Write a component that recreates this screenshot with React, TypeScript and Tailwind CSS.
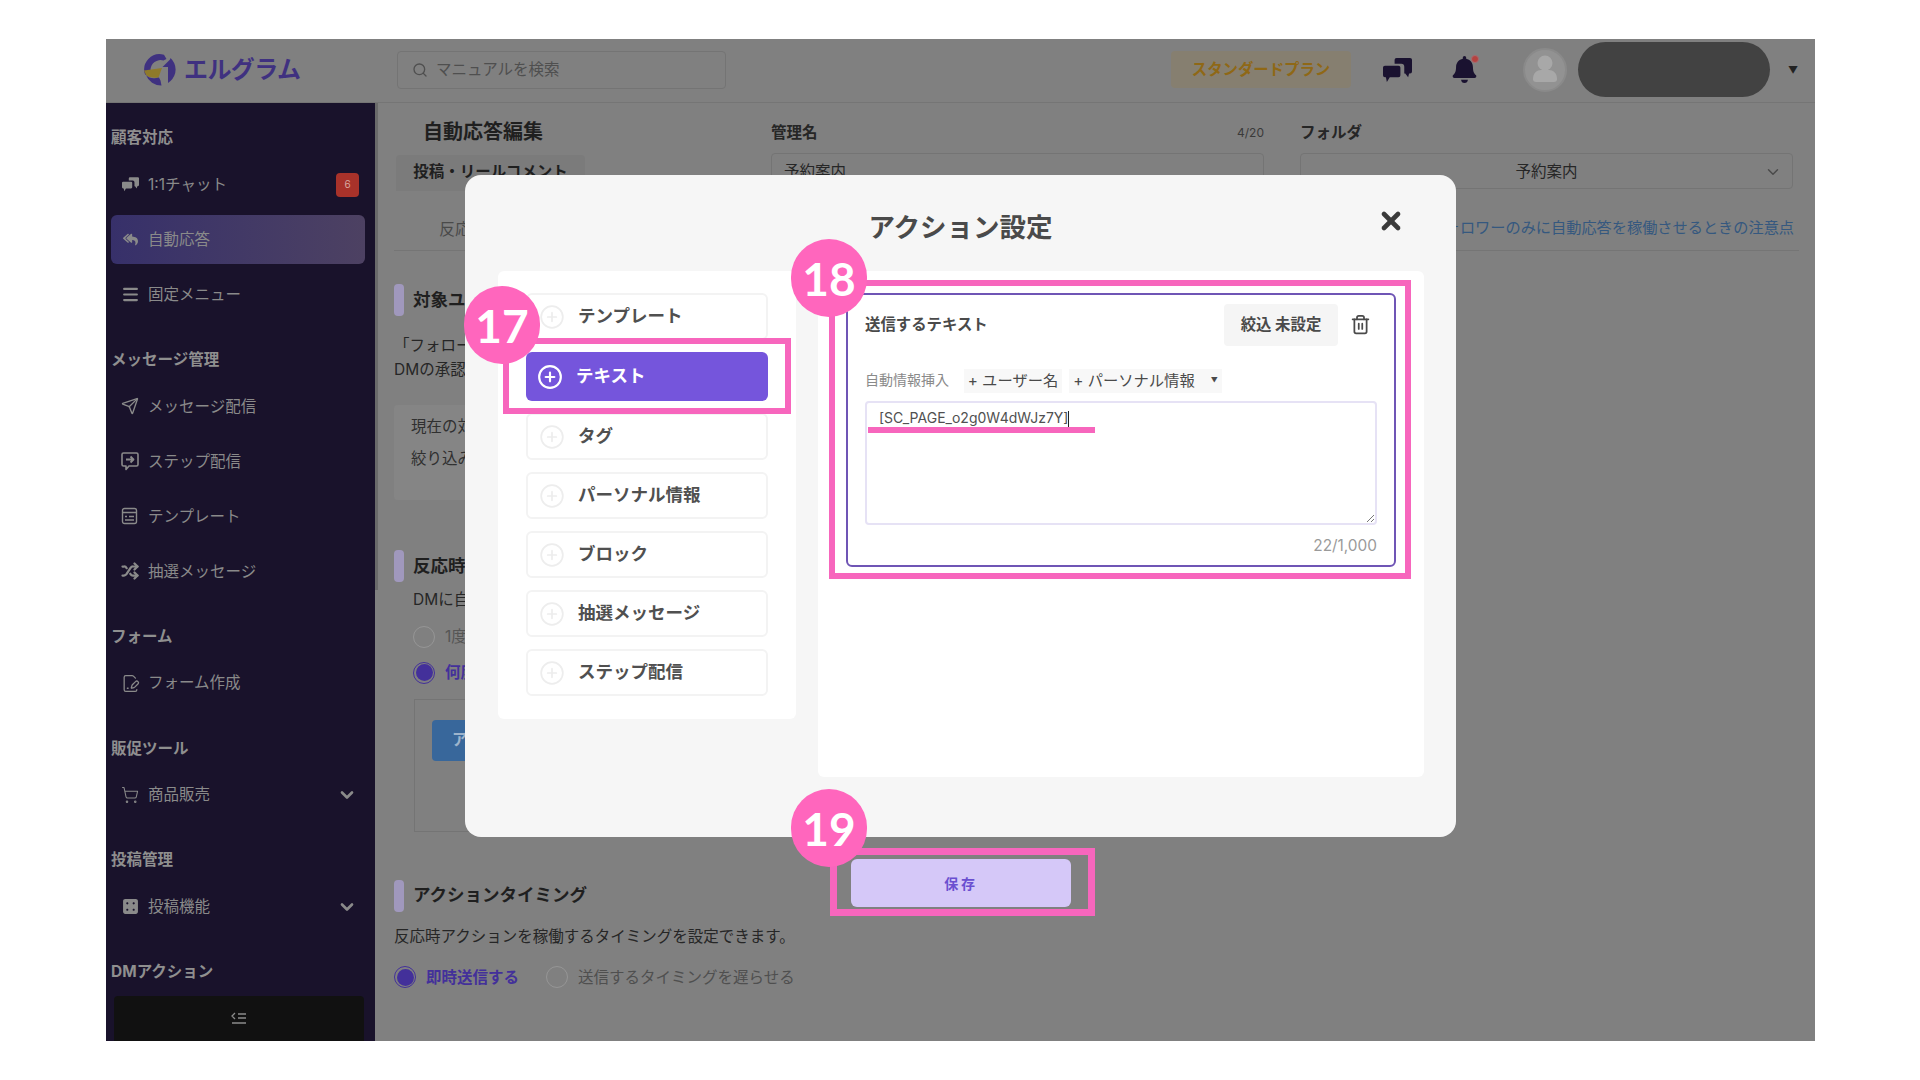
import { ChevronDown, CirclePlus, FilePenLine, Menu, Search, Send, Shuffle, ShoppingCart, Trash2, X } from "lucide-react";
import { FaBell, FaDiceFour, FaReplyAll } from "react-icons/fa";
import type { ReactNode } from "react";

const JP = "font-['Inter','Noto_Sans_CJK_JP',sans-serif]";

type NavItem = { label: string; icon: ReactNode; active?: boolean; badge?: string; chevron?: boolean };
type NavSection = { title: string; items: NavItem[] };

function Bubbles({ size, className }: { size: number; className?: string }) {
  return (
    <svg width={size} height={size} viewBox="0 0 30 26" fill="currentColor" className={className}>
      <path d="M12 2a2 2 0 0 1 2-2h14a2 2 0 0 1 2 2v12a2 2 0 0 1-2 2h-1l-1 4-3-4h-1V9a3 3 0 0 0-3-3h-7z" />
      <path d="M2 8h14a2 2 0 0 1 2 2v8a2 2 0 0 1-2 2H7l-3 5-1-5H2a2 2 0 0 1-2-2v-8a2 2 0 0 1 2-2z" />
    </svg>
  );
}

function StepIcon() {
  return (
    <svg width="20" height="20" viewBox="0 0 20 20" fill="none" stroke="currentColor" strokeWidth="1.6" strokeLinejoin="round">
      <path d="M3.5 2h13A1.5 1.5 0 0 1 18 3.5v10a1.5 1.5 0 0 1-1.5 1.500H9l-3 3.500V15H3.500A1.500 1.500 0 0 1 2 13.500v-10A1.500 1.500 0 0 1 3.500 2z" />
      <path d="M6 8.500h7.500M10.500 5.500l3 3-3 3" strokeWidth="1.800" />
    </svg>
  );
}

function TemplateIcon() {
  return (
    <svg width="18" height="18" viewBox="0 0 18 18" fill="none" stroke="currentColor" strokeWidth="1.400">
      <rect x="1.500" y="1.500" width="14" height="15" rx="2" />
      <path d="M1.500 5.500h14M4 9.500h2M8 9.500h5M4 13h9" />
    </svg>
  );
}

const sections: NavSection[] = [
  {
    title: "顧客対応",
    items: [
      { label: "1:1チャット", icon: <Bubbles size={17} />, badge: "6" },
      { label: "自動応答", icon: <FaReplyAll size={15} />, active: true },
      { label: "固定メニュー", icon: <Menu size={19} strokeWidth={2.800} /> },
    ],
  },
  {
    title: "メッセージ管理",
    items: [
      { label: "メッセージ配信", icon: <Send size={18} strokeWidth={1.800} /> },
      { label: "ステップ配信", icon: <StepIcon /> },
      { label: "テンプレート", icon: <TemplateIcon /> },
      { label: "抽選メッセージ", icon: <Shuffle size={18} strokeWidth={3} /> },
    ],
  },
  { title: "フォーム", items: [{ label: "フォーム作成", icon: <FilePenLine size={19} strokeWidth={1.600} /> }] },
  { title: "販促ツール", items: [{ label: "商品販売", icon: <ShoppingCart size={18} strokeWidth={1.400} />, chevron: true }] },
  { title: "投稿管理", items: [{ label: "投稿機能", icon: <FaDiceFour size={17} />, chevron: true }] },
];

const actions = ["テンプレート", "テキスト", "タグ", "パーソナル情報", "ブロック", "抽選メッセージ", "ステップ配信"];

function Logo() {
  return (
    <svg width="33" height="33" viewBox="0 0 33 33" className="shrink-0">
      <path d="M2.200 22A15.500 15.500 0 0 1 21 1.700L23.500 6l-3 1.500A10 10 0 0 0 7.500 17z" fill="#3f3180" />
      <path d="M1 17.500 19 15l-3.500 9.500Q7 25.500 3 22z" fill="#8f7a2a" />
      <path d="M3 22q5 5 13 2.500l1.500 3 1 5A16 16 0 0 1 3 22z" fill="#3f3180" />
      <path d="M19.500 14 27 6.500 27.500 5a15.500 15.500 0 0 1 0 23l-2.500 2V14z" fill="#3f3180" />
    </svg>
  );
}

function Sidebar() {
  return (
    <aside className="w-[269px] shrink-0 bg-[#19122b] flex flex-col overflow-hidden">
      <nav className="flex-1 overflow-hidden pt-[23px]">
        {sections.map((s) => (
          <div key={s.title} className="mb-[28.750px]">
            <div className="h-6 pl-[5px] mb-[10px] flex items-center text-[15.500px] font-bold text-[#8f8f8f]">{s.title}</div>
            <div className="flex flex-col gap-[6px]">
              {s.items.map((it) => (
                <div
                  key={it.label}
                  className={
                    it.active
                      ? "h-[49px] ml-[5px] mr-[10px] pl-[9px] pr-[6px] rounded-md flex items-center gap-[8px] text-[15.500px] text-[#8a8a8a] bg-gradient-to-r from-[#37306a] to-[#4d4162]"
                      : "h-[49px] ml-[5px] mr-[10px] pl-[9px] pr-[6px] flex items-center gap-[8px] text-[15.500px] text-[#8a8a8a]"
                  }
                >
                  <span className="w-[20px] flex justify-center shrink-0 text-[#8a8a8a]">{it.icon}</span>
                  <span className="flex-1">{it.label}</span>
                  {it.badge && (
                    <span className="w-[23px] h-[24px] rounded bg-[#a8322a] text-[#d8a8a0] text-[10px] flex items-center justify-center">
                      {it.badge}
                    </span>
                  )}
                  {it.chevron && <ChevronDown size={20} strokeWidth={3.200} className="mr-[2px] text-[#8a8a8a]" />}
                </div>
              ))}
            </div>
          </div>
        ))}
        <div className="h-6 pl-[5px] flex items-center text-[15.500px] font-bold text-[#8f8f8f]">DMアクション</div>
      </nav>
      <div className="h-[45px] shrink-0 ml-2 mr-[11px] rounded-t bg-[#111111] flex items-center justify-center">
        <svg width="16" height="16" viewBox="0 0 16 16" fill="none" stroke="#8a8a8a" strokeWidth="1.300">
          <path d="M4 2 1 5l3 3M7 3h8M7 7h8M1 12h14" />
        </svg>
      </div>
    </aside>
  );
}

function SectionTitle({ children }: { children: ReactNode }) {
  return (
    <div className="flex items-center gap-[9px]">
      <span className="w-[10px] h-8 rounded-sm bg-[#a098bd]" />
      <span className="text-[17.500px] font-bold text-[#1f1f1f]">{children}</span>
    </div>
  );
}

function Radio({ checked }: { checked?: boolean }) {
  return checked ? (
    <span className="w-[22px] h-[22px] rounded-full border border-[#43309a] bg-[#808080] flex items-center justify-center shrink-0">
      <span className="w-[17px] h-[17px] rounded-full bg-[#43309a]" />
    </span>
  ) : (
    <span className="w-[22px] h-[22px] rounded-full border border-[#969696] shrink-0" />
  );
}

function Main() {
  return (
    <main className="relative flex-1 bg-[#808080] pl-[19px] pr-[16px] overflow-hidden text-[#262626]">
      {/* スクロールバー */}
      <span className="absolute left-0 top-0 w-[3px] h-[487px] bg-[#6a6a6a]" />
      <div className="flex pt-[15px]">
        <div className="w-[377px] shrink-0">
          <h1 className="pl-[29px] h-7 text-[20px] leading-7 font-bold text-[#1f1f1f]">自動応答編集</h1>
          <div className="mt-[9px] ml-[2px] w-[189px] h-[36px] pb-[3px] bg-[#7b7b7b] rounded-t flex items-center justify-center text-[15.500px] font-bold text-[#1f1f1f]">
            投稿・リールコメント
          </div>
        </div>
        <div className="w-[493px] shrink-0 mt-[5px]">
          <div className="h-5 flex justify-between items-center text-[15.500px] font-bold text-[#262626]">
            <span>管理名</span>
            <span className="text-[12px] font-normal text-[#3a3a3a]">4/20</span>
          </div>
          <div className="mt-[10px] h-9 border border-[#747474] rounded flex items-center px-3 pt-[2px] text-[15.500px]">予約案内</div>
        </div>
        <div className="w-[493px] shrink-0 ml-9 mt-[5px]">
          <div className="h-5 flex items-center text-[15.500px] font-bold text-[#262626]">フォルダ</div>
          <div className="mt-[10px] h-9 border border-[#747474] rounded flex items-center justify-center relative pt-[2px] text-[15.500px]">
            予約案内
            <ChevronDown size={18} className="absolute right-[10px] text-[#4a4a4a]" />
          </div>
        </div>
      </div>
      <div className="h-[60px] border-b border-[#757575] flex items-center justify-between pl-[45px] pr-[5px] text-[16px] pt-[16px]">
        <span className="text-[#4a4a4a]">反応</span>
        <span className="text-[15.200px] text-[#35587f]">フォロワーのみに自動応答を稼働させるときの注意点</span>
      </div>

      <div className="mt-[33px]">
        <SectionTitle>対象ユーザー</SectionTitle>
        <p className="mt-[18px] text-[15.500px] leading-6">「フォロー</p>
        <p className="text-[15.500px] leading-6">DMの承認</p>
        <div className="mt-[23px] w-[700px] h-[95px] bg-[#858585] rounded pl-[17px] pt-[6px] text-[15.500px] leading-8 text-[#303030]">
          <p>現在の対</p>
          <p>絞り込み</p>
        </div>
      </div>

      <div className="mt-[50px]">
        <SectionTitle>反応時</SectionTitle>
        <p className="mt-[6px] pl-[19px] text-[15.500px] leading-6">DMに自</p>
        <div className="mt-[13px] pl-[19px] flex items-center gap-[10px] text-[15.500px] text-[#555555]">
          <Radio />1度
        </div>
        <div className="mt-[13px] pl-[19px] flex items-center gap-[10px] text-[15.500px] font-bold text-[#43309a]">
          <Radio checked />何度
        </div>
        <div className="mt-[14px] ml-[20px] w-[700px] h-[133px] border border-[#747474] pl-[17px] pt-5">
          <div className="w-[100px] h-[41px] rounded bg-[#38679b] text-[#9db4cc] font-bold text-[15.500px] pl-5 flex items-center">ア</div>
        </div>
      </div>

      <div className="mt-[48px]">
        <SectionTitle>アクションタイミング</SectionTitle>
        <p className="mt-[13px] text-[15.500px] leading-6">反応時アクションを稼働するタイミングを設定できます。</p>
        <div className="mt-[17px] flex items-center text-[15.500px]">
          <Radio checked />
          <span className="ml-[10px] font-bold text-[#43309a]">即時送信する</span>
          <span className="ml-[27px] flex">
            <Radio />
          </span>
          <span className="ml-[10px] text-[#4f4f4f]">送信するタイミングを遅らせる</span>
        </div>
      </div>
    </main>
  );
}

function ActionModal() {
  return (
    <div className="absolute left-[359px] top-[136px] w-[991px] h-[662px] rounded-2xl bg-[#f6f6f6] text-[#3f3f3f] px-[33px]">
      <div className="relative h-[96px] flex items-center justify-center pt-[10px]">
        <h2 className="text-[26.500px] font-bold text-[#4a4a4a]">アクション設定</h2>
        <X size={28} strokeWidth={4} className="absolute right-[18px] top-[32px] text-[#3a3a3a]" />
      </div>
      <div className="flex items-start gap-[22px]">
        <div className="w-[298px] shrink-0 rounded-md bg-white px-[28px] pt-[22px] pb-[23px] flex flex-col gap-3">
          {actions.map((a) => {
            const active = a === "テキスト";
            return (
              <div
                key={a}
                className={
                  active
                    ? "h-[49px] rounded-md bg-[#7555dc] text-white flex items-center pl-[11px] gap-[13px] text-[17.500px] font-bold"
                    : "h-[47px] rounded-md border-2 border-[#f3f3f3] text-[#505050] flex items-center pl-[11px] gap-[13px] text-[17.500px] font-bold"
                }
              >
                <CirclePlus size={26} strokeWidth={active ? 2 : 1.600} className={active ? "text-white" : "text-[#ededed]"} />
                {a}
              </div>
            );
          })}
        </div>
        <div className="w-[606px] h-[506px] shrink-0 rounded-md bg-white pl-[28px] pr-[28px] pt-[22px]">
          <div className="h-[274px] rounded-md border-2 border-[#6f55b5] px-[17px]">
            <div className="h-[60px] flex items-center">
              <span className="flex-1 text-[15.400px] font-bold text-[#4a4a4a]">送信するテキスト</span>
              <span className="w-[114px] h-[42px] rounded bg-[#f5f5f5] text-[15.400px] font-bold text-[#4a4a4a] flex items-center justify-center">
                絞込 未設定
              </span>
              <Trash2 size={21} className="ml-[12px] mr-[6px] -mt-[2px] text-[#4a4a4a]" />
            </div>
            <div className="mt-[14px] h-6 flex items-center text-[15.300px] text-[#4a4a4a]">
              <span className="w-[99px] text-[14px] text-[#8a8a8a] -mt-1">自動情報挿入</span>
              <span className="w-[98px] h-6 bg-[#f8f8f8] flex items-center justify-center">+ ユーザー名</span>
              <span className="ml-[7px] w-[153px] h-6 bg-[#f8f8f8] flex items-center justify-center gap-4">
                + パーソナル情報
                <span className="text-[7px]">▼</span>
              </span>
            </div>
            <div className="mt-[8px] relative h-[124px] rounded border-2 border-[#e6e2f5] px-3 pt-[4px] text-[14px] text-[#505050]">
              [SC_PAGE_o2g0W4dWJz7Y]<span className="inline-block w-px h-4 bg-[#222222] align-middle" />
              <svg width="10" height="10" viewBox="0 0 10 10" stroke="#777777" className="absolute right-0 bottom-0">
                <path d="M2 9 9 2M6 9l3-3" />
              </svg>
            </div>
            <div className="mt-[9px] text-right text-[15.400px] text-[#9a9a9a]">22/1,000</div>
          </div>
        </div>
      </div>
    </div>
  );
}

function Marker({ n, className }: { n: string; className: string }) {
  return (
    <div className={`absolute w-[76px] h-[78px] rounded-full bg-[#ff66bd] text-white text-[46px] font-['Lato',sans-serif] font-bold flex items-center justify-center ${className}`}>
      {n}
    </div>
  );
}

export default function App() {
  return (
    <div className={`w-[1920px] h-[1080px] bg-white pt-[39px] pl-[106px] ${JP}`}>
      <div className="relative w-[1709px] h-[1002px] overflow-hidden flex flex-col bg-[#808080]">
        <header className="h-[64px] shrink-0 border-b border-[#757575] flex items-center bg-[#808080]">
          <div className="w-[291px] pl-[37px] flex items-center gap-[8px] -mt-[2px]">
            <Logo />
            <span className="text-[24px] font-bold text-[#3f3180] tracking-tight">エルグラム</span>
          </div>
          <div className="w-[329px] h-[38px] -mt-[2px] border border-[#747474] rounded flex items-center gap-2 pl-[14px] text-[15.500px] text-[#4f4f4f]">
            <Search size={16} />
            マニュアルを検索
          </div>
          <div className="ml-[445px] w-[180px] h-[37px] -mt-[2px] rounded bg-[#867f70] text-[#8f6816] text-[15.400px] font-bold flex items-center justify-center">
            スタンダードプラン
          </div>
          <Bubbles size={29} className="ml-[32px] text-[#1a1230]" />
          <span className="relative ml-[39px] -mt-[2px]">
            <FaBell size={27} className="text-[#1a1230]" />
            <span className="absolute right-[-1px] top-[-1px] w-[8px] h-[8px] rounded-full bg-[#b5423f] border border-[#a86a70]" />
          </span>
          <svg width="44" height="44" viewBox="0 0 44 44" className="ml-[45px] -mt-[2px] shrink-0">
            <circle cx="22" cy="22" r="21" fill="#929292" stroke="#8a8a8a" strokeWidth="2" />
            <circle cx="22" cy="15" r="7.500" fill="#a8a8a8" />
            <path d="M10 31c0-6 4-9 8-9h8c4 0 8 3 8 9 0 2-1 3-3 3H13c-2 0-3-1-3-3z" fill="#a8a8a8" />
          </svg>
          <span className="ml-[11px] w-[192px] h-[55px] -mt-[2px] rounded-full bg-[#424242]" />
          <span className="ml-[18px] text-[10px] text-[#222222]">▼</span>
        </header>
        <div className="flex-1 flex min-h-0">
          <Sidebar />
          <Main />
        </div>

        <ActionModal />

        <div className="absolute left-[745px] top-[820px] w-[220px] h-[48px] rounded-md bg-[#d5c8f8] text-[#6a4fd0] text-[14px] font-bold tracking-[0.2em] flex items-center justify-center">
          保存
        </div>

        {/* 説明用の枠と番号 */}
        <div className="absolute left-[397px] top-[299px] w-[288px] h-[76px] border-[6px] border-[#f766bd]" />
        <div className="absolute left-[723px] top-[241px] w-[582px] h-[299px] border-[6px] border-[#f766bd]" />
        <div className="absolute left-[762px] top-[388px] w-[227px] h-[6px] bg-[#f766bd]" />
        <div className="absolute left-[724px] top-[809px] w-[265px] h-[68px] border-[7px] border-[#f766bd]" />
        <Marker n="17" className="left-[358px] top-[247px]" />
        <Marker n="18" className="left-[685px] top-[200px]" />
        <Marker n="19" className="left-[685px] top-[750px]" />
      </div>
    </div>
  );
}
